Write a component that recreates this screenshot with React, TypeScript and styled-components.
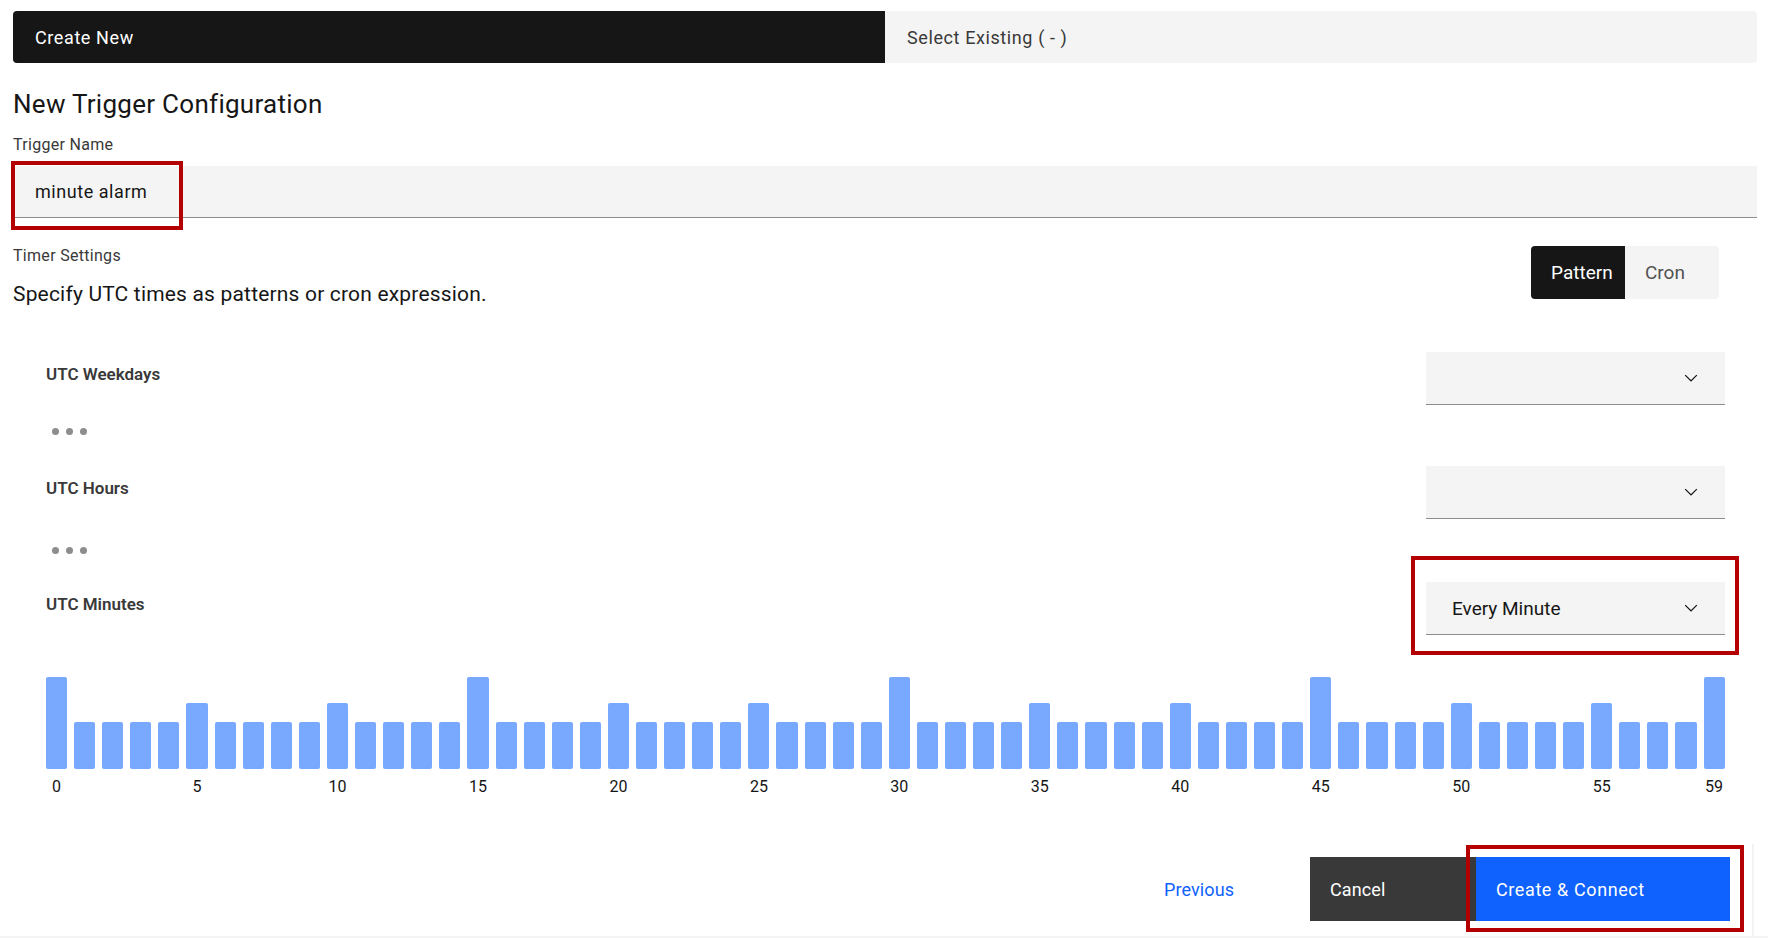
import styled, { createGlobalStyle } from 'styled-components';

const GlobalStyle = createGlobalStyle`
  html, body {
    margin: 0;
    padding: 0;
    background: #ffffff;
  }
  body {
    font-family: Roboto, "Liberation Sans", sans-serif;
    color: #161616;
  }
  * {
    box-sizing: border-box;
  }
`;

const Page = styled.div`
    padding: 11px 11px 0 13px;
`;

const Tabs = styled.div`
    display: flex;
    height: 52px;
`;

const Tab = styled.div<{ $active?: boolean }>`
    flex: 1;
    display: flex;
    align-items: center;
    padding-left: 22px;
    font-size: 18px;
    letter-spacing: 0.6px;
    background: ${(p) => (p.$active ? '#161616' : '#f4f4f4')};
    color: ${(p) => (p.$active ? '#ffffff' : '#393939')};
    &:first-child {
        border-radius: 4px 0 0 4px;
    }
    &:last-child {
        border-radius: 0 4px 4px 0;
    }
`;

const Heading = styled.h1`
    margin: 25px 0 0;
    font-size: 26px;
    font-weight: 400;
    line-height: 32px;
    letter-spacing: 0.28px;
    color: #161616;
`;

const FieldLabel = styled.div<{ $flush?: boolean }>`
    margin-top: ${(p) => (p.$flush ? 0 : 15)}px;
    font-size: 16px;
    line-height: 20px;
    letter-spacing: 0.3px;
    color: #393939;
`;

const Field = styled.div`
    position: relative;
    margin-top: 11px;
`;

const TextInput = styled.input`
    display: block;
    width: 100%;
    height: 52px;
    border: none;
    border-bottom: 1px solid #8d8d8d;
    background: #f4f4f4;
    padding: 0 0 0 22px;
    font-family: inherit;
    font-size: 18px;
    letter-spacing: 0.55px;
    color: #161616;
    outline: none;
`;

const Highlight = styled.span<{ $x: number; $y: number; $w: number; $h: number }>`
    position: absolute;
    left: ${(p) => p.$x}px;
    top: ${(p) => p.$y}px;
    width: ${(p) => p.$w}px;
    height: ${(p) => p.$h}px;
    border: 4px solid #b40000;
    pointer-events: none;
`;

const SettingsHeader = styled.div`
    display: flex;
    justify-content: space-between;
    align-items: flex-start;
    margin-top: 28px;
    padding-right: 38px;
`;

const Description = styled.div`
    margin-top: 14px;
    font-size: 21px;
    line-height: 28px;
    letter-spacing: 0.18px;
    color: #161616;
`;

const Toggle = styled.div`
    display: flex;
    height: 53px;
    border-radius: 4px;
    overflow: hidden;
`;

const ToggleOption = styled.div<{ $active?: boolean }>`
    width: 94px;
    display: flex;
    align-items: center;
    padding-left: 20px;
    font-size: 19px;
    background: ${(p) => (p.$active ? '#161616' : '#f4f4f4')};
    color: ${(p) => (p.$active ? '#ffffff' : '#525252')};
`;

const PatternSection = styled.div`
    margin-top: 44px;
    padding: 0 32px 0 33px;
`;

const PatternRow = styled.div`
    display: flex;
    justify-content: space-between;
    align-items: flex-start;
    height: 53px;
`;

const RowLabel = styled.div`
    padding-top: 11px;
    font-size: 17px;
    font-weight: 600;
    line-height: 22px;
    color: #393939;
`;

const SelectWrap = styled.div`
    position: relative;
`;

const Select = styled.div`
    width: 299px;
    height: 53px;
    display: flex;
    align-items: center;
    justify-content: space-between;
    padding: 0 24px 0 26px;
    background: #f4f4f4;
    border-bottom: 1px solid #8d8d8d;
    font-size: 19px;
    color: #161616;
`;

const DotsRow = styled.div<{ $top: number; $height: number }>`
    height: ${(p) => p.$height}px;
    display: flex;
    gap: 7px;
    padding: ${(p) => p.$top}px 0 0 6px;
`;

const Dot = styled.span`
    width: 7px;
    height: 7px;
    border-radius: 50%;
    background: #8d8d8d;
`;

const Chart = styled.div`
    display: flex;
    gap: 7px;
    margin-top: 42px;
`;

const Column = styled.div`
    flex: 1;
    min-width: 0;
    display: flex;
    flex-direction: column;
`;

const BarArea = styled.div`
    height: 92px;
    display: flex;
    align-items: flex-end;
`;

const Bar = styled.div<{ $h: number }>`
    width: 100%;
    height: ${(p) => p.$h}px;
    border-radius: 2px;
    background: #78a9ff;
`;

const Tick = styled.div`
    margin-top: 8px;
    height: 20px;
    display: flex;
    justify-content: center;
    white-space: nowrap;
    font-size: 16px;
    line-height: 20px;
    color: #161616;
`;

const Footer = styled.div`
    display: flex;
    justify-content: flex-end;
    margin: 47px 3px 0 0;
    padding: 13px 22px 15px 0;
    border-right: 2px solid #f3f3f3;
`;

const Button = styled.button<{ $kind: 'ghost' | 'secondary' | 'primary' }>`
    width: ${(p) => (p.$kind === 'primary' ? 254 : 166)}px;
    height: 64px;
    display: flex;
    align-items: center;
    padding: 0 0 0 20px;
    border: none;
    border-radius: 0;
    font-family: inherit;
    font-size: 18px;
    letter-spacing: ${(p) => (p.$kind === 'primary' ? 0.6 : 0.1)}px;
    cursor: pointer;
    background: ${(p) =>
        p.$kind === 'primary' ? '#0f62fe' : p.$kind === 'secondary' ? '#393939' : 'transparent'};
    color: ${(p) => (p.$kind === 'ghost' ? '#0f62fe' : '#ffffff')};
`;

const PrimaryWrap = styled.div`
    position: relative;
`;

const BottomFade = styled.div`
    position: fixed;
    left: 0;
    right: 0;
    bottom: 0;
    height: 30px;
    z-index: -1;
    background: linear-gradient(to bottom, rgba(240, 240, 240, 0), rgba(240, 240, 240, 0.7));
    pointer-events: none;
`;

const Chevron = () => (
    <svg width="20" height="20" viewBox="0 0 16 16" fill="#161616">
        <path d="M8 11L3 6 3.7 5.3 8 9.6 12.3 5.3 13 6z" />
    </svg>
);

const minutes = Array.from({ length: 60 }, (_, i) => i);

const barHeight = (m: number) => {
    if (m % 15 === 0 || m === 59) return 92;
    if (m % 5 === 0) return 66;
    return 47;
};

const showTick = (m: number) => m % 5 === 0 || m === 59;

const Dots = ({ top, height }: { top: number; height: number }) => (
    <DotsRow $top={top} $height={height}>
        <Dot />
        <Dot />
        <Dot />
    </DotsRow>
);

export default function App() {
    return (
        <Page>
            <GlobalStyle />
            <Tabs>
                <Tab $active>Create New</Tab>
                <Tab>Select Existing ( - )</Tab>
            </Tabs>

            <Heading>New Trigger Configuration</Heading>
            <FieldLabel>Trigger Name</FieldLabel>
            <Field>
                <TextInput defaultValue="minute alarm" />
                <Highlight $x={-2} $y={-5} $w={172} $h={69} />
            </Field>

            <SettingsHeader>
                <div>
                    <FieldLabel $flush>Timer Settings</FieldLabel>
                    <Description>Specify UTC times as patterns or cron expression.</Description>
                </div>
                <Toggle>
                    <ToggleOption $active>Pattern</ToggleOption>
                    <ToggleOption>Cron</ToggleOption>
                </Toggle>
            </SettingsHeader>

            <PatternSection>
                <PatternRow>
                    <RowLabel>UTC Weekdays</RowLabel>
                    <Select>
                        <span />
                        <Chevron />
                    </Select>
                </PatternRow>
                <Dots top={23} height={61} />
                <PatternRow>
                    <RowLabel>UTC Hours</RowLabel>
                    <Select>
                        <span />
                        <Chevron />
                    </Select>
                </PatternRow>
                <Dots top={28} height={63} />
                <PatternRow>
                    <RowLabel>UTC Minutes</RowLabel>
                    <SelectWrap>
                        <Select>
                            <span>Every Minute</span>
                            <Chevron />
                        </Select>
                        <Highlight $x={-15} $y={-26} $w={328} $h={99} />
                    </SelectWrap>
                </PatternRow>

                <Chart>
                    {minutes.map((m) => (
                        <Column key={m}>
                            <BarArea>
                                <Bar $h={barHeight(m)} />
                            </BarArea>
                            <Tick>{showTick(m) ? m : ''}</Tick>
                        </Column>
                    ))}
                </Chart>
            </PatternSection>

            <Footer>
                <Button $kind="ghost">Previous</Button>
                <Button $kind="secondary">Cancel</Button>
                <PrimaryWrap>
                    <Button $kind="primary">Create &amp; Connect</Button>
                    <Highlight $x={-10} $y={-12} $w={278} $h={87} />
                </PrimaryWrap>
            </Footer>
            <BottomFade />
        </Page>
    );
}
